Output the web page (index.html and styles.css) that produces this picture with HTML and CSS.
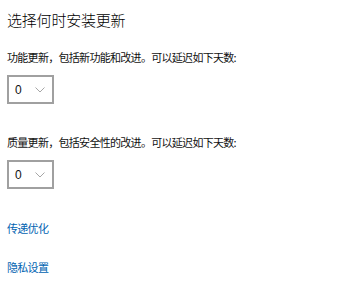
FILE: index.html
```html
<!DOCTYPE html>
<html lang="zh-CN">
<head>
    <meta charset="UTF-8">
    <meta name="viewport" content="width=device-width, initial-scale=1.0">
    <title>选择何时安装更新</title>
    <link rel="stylesheet" href="styles.css">
</head>
<body>
    <main class="page">
        <h1 class="title">选择何时安装更新</h1>

        <!-- Feature updates -->
        <p class="label">功能更新，包括新功能和改进。可以延迟如下天数:</p>
        <div class="dropdown">
            <span class="dropdown-value">0</span>
            <svg class="chevron" width="10" height="6" viewBox="0 0 10 6">
                <polyline points="0.5,0.5 5,5 9.5,0.5" fill="none" stroke="#a6a6a6" stroke-width="1"/>
            </svg>
        </div>

        <!-- Quality updates -->
        <p class="label label-second">质量更新，包括安全性的改进。可以延迟如下天数:</p>
        <div class="dropdown">
            <span class="dropdown-value">0</span>
            <svg class="chevron" width="10" height="6" viewBox="0 0 10 6">
                <polyline points="0.5,0.5 5,5 9.5,0.5" fill="none" stroke="#a6a6a6" stroke-width="1"/>
            </svg>
        </div>

        <a class="link link-first" href="#">传递优化</a>
        <a class="link link-second" href="#">隐私设置</a>
    </main>
</body>
</html>
```

FILE: styles.css
```css
/* Global styles */
body {
    margin: 0;
    padding: 0;
    background-color: #fff;
    color: #000;
    font-family: "Noto Sans CJK SC", "Noto Sans", sans-serif;
}

.page {
    display: flex;
    flex-direction: column;
    align-items: flex-start;
    padding: 10px 7px 0 7px;
}

.title {
    margin: 0;
    font-size: 15px;
    font-weight: 300;
    line-height: 20px;
    letter-spacing: -0.2px;
}

.label {
    margin: 20px 0 0 0;
    font-size: 11px;
    line-height: 14px;
    letter-spacing: -0.7px;
    color: #111;
}

.label-second {
    margin-top: 31px;
}

/* Fake combo box */
.dropdown {
    display: flex;
    align-items: center;
    justify-content: space-between;
    box-sizing: border-box;
    width: 47px;
    height: 29px;
    margin-top: 11px;
    padding: 0 7px 0 6px;
    border: 2px solid #a0a0a0;
    background-color: #fff;
}

.dropdown-value {
    font-family: "Liberation Sans", Arial, sans-serif;
    font-size: 12px;
    color: #111;
}

.chevron {
    display: block;
}

.link {
    font-size: 11px;
    line-height: 14px;
    letter-spacing: -0.7px;
    color: #0063b1;
    text-decoration: none;
}

.link-first {
    margin-top: 32px;
}

.link-second {
    margin-top: 25px;
}
```
